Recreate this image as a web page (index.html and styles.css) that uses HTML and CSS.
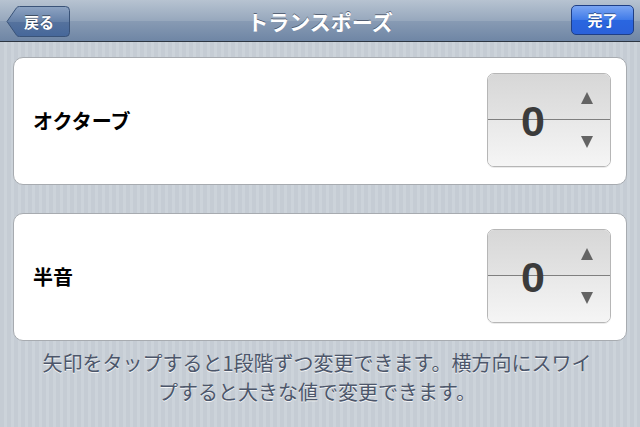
FILE: index.html
```html
<!DOCTYPE html>
<html lang="ja">
<head>
    <meta charset="utf-8">
    <title>トランスポーズ</title>
    <link rel="stylesheet" href="styles.css">
</head>
<body>
    <div class="navbar">
        <div class="nav-left">
            <div class="back-button">
                <svg class="back-shape" width="64" height="31" viewBox="0 0 64 31">
                    <defs>
                        <linearGradient id="backGrad" x1="0" y1="0" x2="0" y2="1">
                            <stop offset="0" stop-color="#8ea4c3"/>
                            <stop offset="0.5" stop-color="#6681a8"/>
                            <stop offset="0.52" stop-color="#55729d"/>
                            <stop offset="1" stop-color="#46679a"/>
                        </linearGradient>
                    </defs>
                    <path d="M1 15.5 L10.5 1.8 Q11.5 0.5 13.5 0.5 L59.5 0.5 Q63.5 0.5 63.5 4.5 L63.5 26.5 Q63.5 30.5 59.5 30.5 L13.5 30.5 Q11.5 30.5 10.5 29.2 Z" fill="url(#backGrad)" stroke="#3a5378" stroke-width="1"/>
                </svg>
                <span class="back-label">戻る</span>
            </div>
        </div>
        <div class="nav-title">トランスポーズ</div>
        <div class="nav-right">
            <div class="done-button">完了</div>
        </div>
    </div>

    <div class="content">
        <!-- Octave -->
        <div class="card">
            <div class="card-label">オクターブ</div>
            <div class="stepper">
                <div class="half-top"></div>
                <div class="half-bottom"></div>
                <div class="value">0</div>
                <div class="arrow arrow-up"></div>
                <div class="arrow arrow-down"></div>
            </div>
        </div>

        <!-- Semitone -->
        <div class="card">
            <div class="card-label">半音</div>
            <div class="stepper">
                <div class="half-top"></div>
                <div class="half-bottom"></div>
                <div class="value">0</div>
                <div class="arrow arrow-up"></div>
                <div class="arrow arrow-down"></div>
            </div>
        </div>

        <p class="footnote">矢印をタップすると1段階ずつ変更できます。横方向にスワイ<br>プすると大きな値で変更できます。</p>
    </div>
</body>
</html>
```

FILE: styles.css
```css
html, body {
    margin: 0;
    padding: 0;
}
body {
    width: 640px;
    height: 427px;
    overflow: hidden;
    font-family: "Noto Sans CJK JP", "Liberation Sans", sans-serif;
    background-color: #c7ced6;
    background-image: repeating-linear-gradient(90deg, #c5ccd4 0, #c5ccd4 4px, #ccd3da 4px, #ccd3da 7px);
}

/* navigation bar */
.navbar {
    height: 41px;
    display: grid;
    grid-template-columns: 1fr auto 1fr;
    align-items: center;
    padding: 0 6px;
    background: linear-gradient(to bottom, #b7c3d1 0%, #97a8bd 50%, #889bb4 51%, #6f86a5 100%);
    border-bottom: 1px solid #2d3642;
}
.nav-right {
    display: flex;
    justify-content: flex-end;
}
.nav-title {
    color: #fff;
    font-size: 21px;
    font-weight: bold;
    text-shadow: 0 -1px 0 rgba(40, 50, 70, 0.6);
}
.back-button {
    display: grid;
    width: 64px;
    height: 31px;
    margin-top: 1px;
}
.back-shape,
.back-label {
    grid-area: 1 / 1;
}
.back-label {
    align-self: center;
    justify-self: start;
    padding-left: 18px;
    color: #fff;
    font-size: 15px;
    font-weight: bold;
    text-shadow: 0 -1px 0 rgba(0, 0, 0, 0.45);
}
.done-button {
    width: 61px;
    height: 28px;
    line-height: 28px;
    text-align: center;
    color: #fff;
    font-size: 15px;
    font-weight: bold;
    border: 1px solid #1f3f86;
    border-radius: 5px;
    background: linear-gradient(to bottom, #7aa5f3 0%, #3f7ae8 50%, #2a66e0 51%, #2a61da 100%);
    text-shadow: 0 -1px 0 rgba(0, 0, 0, 0.4);
    margin-top: -1px;
}

/* grouped cards */
.content {
    padding: 15px 13px 0;
}
.card {
    display: flex;
    align-items: center;
    justify-content: space-between;
    background: #fff;
    border: 1px solid #a7abb0;
    border-radius: 10px;
    padding: 15px 15px 17px 19px;
    margin-bottom: 28px;
}
.card-label {
    font-size: 20px;
    font-weight: bold;
    color: #000;
}

/* stepper */
.stepper {
    display: grid;
    grid-template-columns: 4px 1fr 26px 10px;
    grid-template-rows: 1fr 1fr;
    width: 124px;
    height: 94px;
    box-sizing: border-box;
    border: 1px solid #b6b6b6;
    border-radius: 7px;
    overflow: hidden;
    box-shadow: 0 1px 0 rgba(0, 0, 0, 0.08);
}
.half-top {
    grid-area: 1 / 1 / 2 / 5;
    background: linear-gradient(to bottom, #d7d7d7, #e3e3e3);
    border-bottom: 1px solid #7f7f7f;
}
.half-bottom {
    grid-area: 2 / 1 / 3 / 5;
    background: linear-gradient(to bottom, #e8e8e8, #f5f5f5);
}
.value {
    grid-area: 1 / 2 / 3 / 3;
    align-self: center;
    justify-self: center;
    font-family: "Liberation Sans", Arial, sans-serif;
    font-weight: bold;
    font-size: 43px;
    color: #3b3b3b;
    line-height: 1;
    padding-top: 2px;
}
.arrow {
    align-self: center;
    justify-self: center;
    width: 0;
    height: 0;
    border-left: 6.5px solid transparent;
    border-right: 6.5px solid transparent;
}
.arrow-up {
    grid-area: 1 / 3;
    border-bottom: 12px solid #646464;
    margin-top: 1px;
}
.arrow-down {
    grid-area: 2 / 3;
    border-top: 12px solid #646464;
    margin-top: -2px;
}

/* footnote */
.footnote {
    margin: -21px 0 0;
    padding: 0 10px 0 4px;
    text-align: center;
    font-size: 20px;
    line-height: 29px;
    color: #4c566a;
    text-shadow: 0 1px 0 rgba(255, 255, 255, 0.8);
}
```
